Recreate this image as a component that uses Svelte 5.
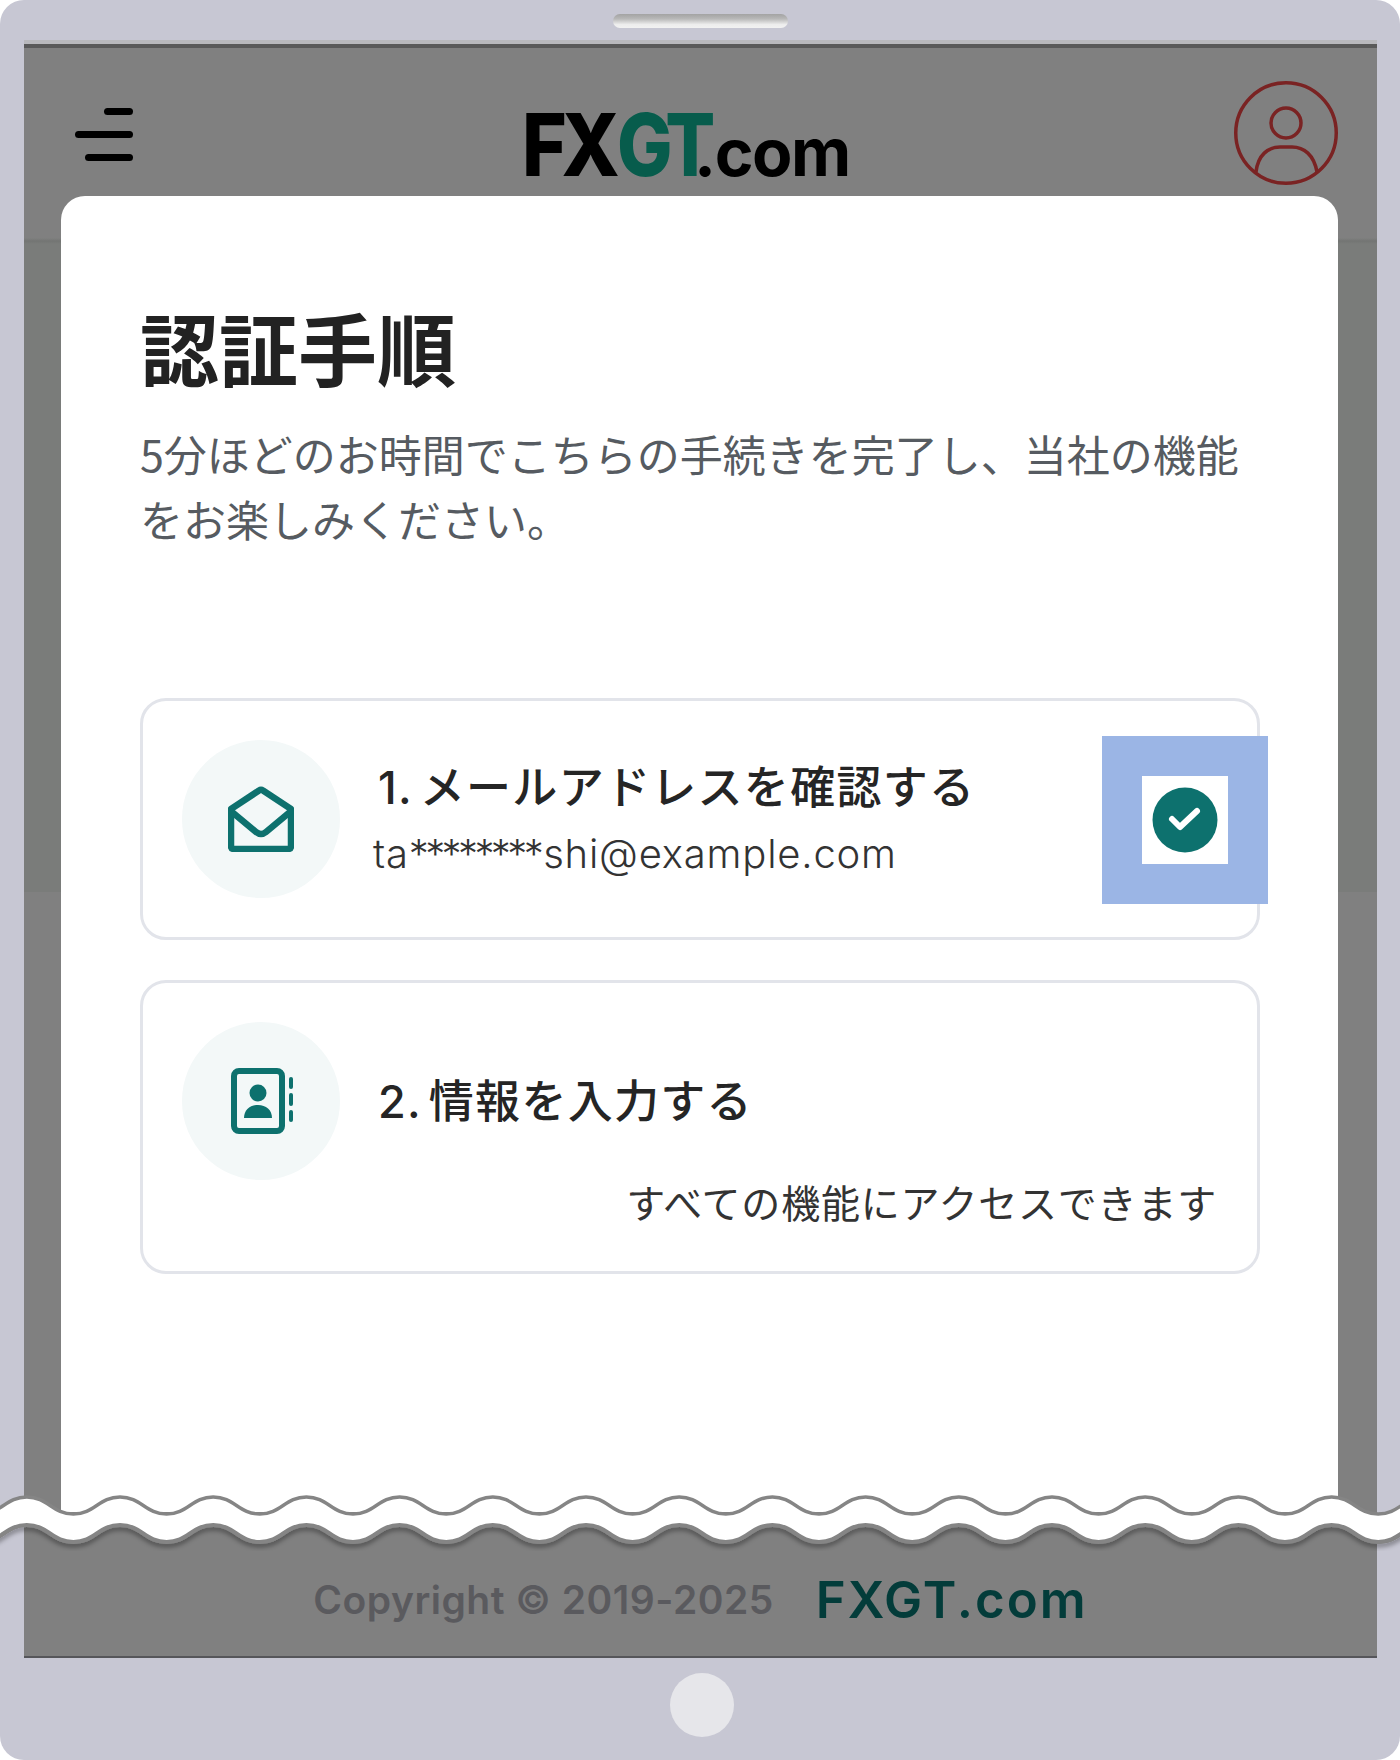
<script>
	// wave edges of the torn-page strip, built from half periods
	const period = 93.2;
	function wave(y) {
		const half = period / 2;
		let x = 120 - period * 2;
		let d = `M${x} ${y}`;
		let up = false;
		while (x < 1500) {
			const a = up ? y : y + 17;
			const b = up ? y + 17 : y;
			d += ` C${(x + 21).toFixed(1)} ${b} ${(x + half - 21).toFixed(1)} ${a} ${(x + half).toFixed(1)} ${a}`;
			x += half;
			up = !up;
		}
		return d;
	}
	const topEdge = wave(8);
	const lowEdge = wave(36);
	const band = `${topEdge} L1600 ${80} L-200 80 Z`;
</script>

<div class="device">
	<div class="notch"><span class="pill"></span></div>
	<div class="screen">
		<header class="head">
			<div class="burger"><i class="a"></i><i class="b"></i><i class="c"></i></div>
			<div class="logo"><span class="fx">FX</span><span class="gt">GT</span><span class="com">.com</span></div>
			<svg class="avatar" width="104" height="104" viewBox="0 0 104 104" fill="none" stroke="#7a2323" stroke-width="3.500">
				<circle cx="52" cy="52" r="50.250" />
				<circle cx="52" cy="42" r="15" />
				<path d="M22 91C24 74 34 66 46 66H58C70 66 80 74 83 91" />
			</svg>
		</header>

		<main class="modal">
			<h1>認証手順</h1>
			<p class="lead">5分ほどのお時間でこちらの手続きを完了し、当社の機能をお楽しみください。</p>

			<section class="card first">
				<div class="round">
					<svg width="66" height="66" viewBox="0 0 66 66" fill="none" stroke="#0d716e" stroke-width="6.500" stroke-linejoin="round" stroke-linecap="round">
						<path d="M3 23 31 4.500Q33 3 35 4.500L63 23V60Q63 63 60 63H6Q3 63 3 60Z" />
						<path d="M4 26 28 46Q33 50 38 46L62 26" />
					</svg>
				</div>
				<div class="info">
					<div class="name">1. メールアドレスを確認する</div>
					<div class="mail">ta<span class="stars">********</span>shi@example.com</div>
				</div>
				<div class="mark">
					<div class="tick">
						<svg width="66" height="66" viewBox="0 0 66 66">
							<circle cx="33" cy="33" r="32.500" fill="#0d716e" />
							<path d="M20 32 28 40 45 24" fill="none" stroke="#fff" stroke-width="6" stroke-linecap="round" stroke-linejoin="round" />
						</svg>
					</div>
				</div>
			</section>

			<section class="card second">
				<div class="row">
					<div class="round">
						<svg class="book" width="64" height="66" viewBox="0 0 64 66" fill="#0d716e">
							<rect x="3" y="3" width="48" height="60" rx="5" fill="none" stroke="#0d716e" stroke-width="6" />
							<circle cx="27" cy="25" r="8.500" />
							<path d="M13 50C13 42 19 37 27 37S41 42 41 50Z" />
							<rect x="58" y="9" width="4" height="12" rx="2" />
							<rect x="58" y="25" width="4" height="13" rx="2" />
							<rect x="58" y="42" width="4" height="12" rx="2" />
						</svg>
					</div>
					<div class="name">2. 情報を入力する</div>
				</div>
				<div class="note">すべての機能にアクセスできます</div>
			</section>
		</main>

		<footer class="foot">
			<span class="copy">Copyright © 2019-2025</span>
			<span class="brand">FXGT.com</span>
		</footer>
	</div>
	<div class="home"><span></span></div>

	<svg class="tear" width="1400" height="80" viewBox="0 0 1400 80">
		<defs>
			<filter id="tearShadow" x="-5%" y="-50%" width="110%" height="200%">
				<feDropShadow dx="0" dy="3" stdDeviation="2.500" flood-color="#000" flood-opacity="0.45" />
			</filter>
			<clipPath id="keep"><path d={`${lowEdge} L1600 -20 L-200 -20 Z`} /></clipPath>
		</defs>
		<path d={lowEdge} fill="none" stroke="#808080" stroke-width="4" filter="url(#tearShadow)" />
		<path d={band} fill="#fff" clip-path="url(#keep)" />
		<path d={topEdge} fill="none" stroke="#858585" stroke-width="3.500" />
		<path d={lowEdge} fill="none" stroke="#858585" stroke-width="4" />
	</svg>
</div>

<style>
	:global(body) { background: #fff; }
	.device { position: relative; width: 1400px; height: 1760px; background: #c7c7d3; border-radius: 24px; overflow: hidden; display: flex; flex-direction: column; font-family: "Noto Sans CJK JP", sans-serif; }
	.notch { height: 40px; display: flex; justify-content: center; align-items: flex-start; padding-top: 14px; box-sizing: border-box; flex: none; }
	.pill { width: 175px; height: 14px; border-radius: 7px; background: linear-gradient(#a3a3a3, #b8b8b8 35%, #ededed 75%, #f2f2f2); }
	.screen { flex: none; height: 1618px; margin: 0 23px 0 24px; background: linear-gradient(#808080 194px, #737573 197px, #7a7c7a 200px, #7a7c7a 848px, #808080 848px); border-top: 4px solid #b9b9bd; box-sizing: border-box; display: flex; flex-direction: column; border-bottom: 2px solid #56565a; }
	.head { flex: none; height: 152px; border-top: 4px solid #5a5a5a; box-sizing: border-box; display: flex; align-items: flex-start; justify-content: space-between; padding: 33px 39px 0 51px; }
	.burger { display: flex; flex-direction: column; align-items: flex-end; gap: 16px; width: 58px; margin-top: 27px; }
	.burger i { display: block; height: 7px; border-radius: 4px; background: #000; }
	.burger .a { width: 29px; }
	.burger .b { width: 58px; }
	.burger .c { width: 48px; }
	.logo { display: flex; align-items: baseline; font-family: Inter, sans-serif; font-weight: 800; line-height: 1; margin: 20px 0 0 5px; height: 76px; }
	.fx { font-size: 87px; letter-spacing: -6px; color: #000; transform: scaleX(0.88); transform-origin: left; margin-right: -10px; }
	.gt { font-size: 87px; letter-spacing: -6px; color: #075c4c; transform: scaleX(0.85); transform-origin: left; margin-right: -33px; }
	.com { font-size: 66px; font-weight: 700; letter-spacing: -1.500px; color: #000; }
	.avatar { display: block; }
	.modal { flex: 1; margin: 0 39px 0 37px; background: #fff; border-radius: 24px 24px 0 0; padding: 103px 78px 0 79px; min-height: 0; }
	h1 { margin: 0; font-size: 79px; line-height: 96px; font-weight: 700; color: #222; }
	.lead { margin: 26px 0 147px; font-size: 43px; line-height: 65px; font-weight: 400; color: #565b61; width: 1110px; }
	.card { border: 3px solid #e2e4ea; border-radius: 26px; background: #fff; box-sizing: border-box; }
	.first { height: 242px; display: flex; align-items: center; padding-left: 39px; }
	.second { height: 294px; margin-top: 40px; padding: 39px 40px 0 39px; }
	.row { display: flex; align-items: center; }
	.round { flex: none; width: 158px; height: 158px; border-radius: 50%; background: #f3f8f8; display: flex; align-items: center; justify-content: center; }
	.book { margin-left: 4px; }
	.info { flex: 1; margin-left: 33px; margin-top: 0; }
	.name { font-family: Inter, "Noto Sans CJK JP", sans-serif; font-size: 45px; line-height: 58px; color: #252525; letter-spacing: 1.300px; word-spacing: -6px; font-weight: 500; margin-left: 5px; }
	.second .name { margin: 1px 0 0 38px; }
	.mail { font-family: Inter, sans-serif; font-weight: 300; font-size: 40px; line-height: 50px; color: #333; letter-spacing: 0.800px; margin-top: 12px; }
	.stars { letter-spacing: -3.600px; margin-right: 3px; }
	.mark { flex: none; background: #9bb5e5; padding: 40px; margin: 2px -11px 0 0; }
	.tick { background: #fff; width: 86px; height: 88px; display: flex; align-items: center; justify-content: center; }
	.note { text-align: right; font-size: 39px; line-height: 50px; letter-spacing: 0.800px; color: #333; margin-top: -4px; }
	.foot { flex: none; height: 144px; display: flex; align-items: center; justify-content: center; gap: 42px; padding-top: 30px; box-sizing: border-box; font-family: Inter, sans-serif; }
	.copy { font-size: 39px; font-weight: 600; letter-spacing: 0.500px; color: #5a5a5e; }
	.brand { font-size: 51px; font-weight: 600; letter-spacing: 2px; color: #033c3a; }
	.home { flex: 1; display: flex; justify-content: center; padding-top: 15px; }
	.home span { display: block; width: 64px; height: 64px; border-radius: 50%; background: #e6e6ea; margin-left: 4px; }
	.tear { position: absolute; left: 0; top: 1489px; }
</style>
